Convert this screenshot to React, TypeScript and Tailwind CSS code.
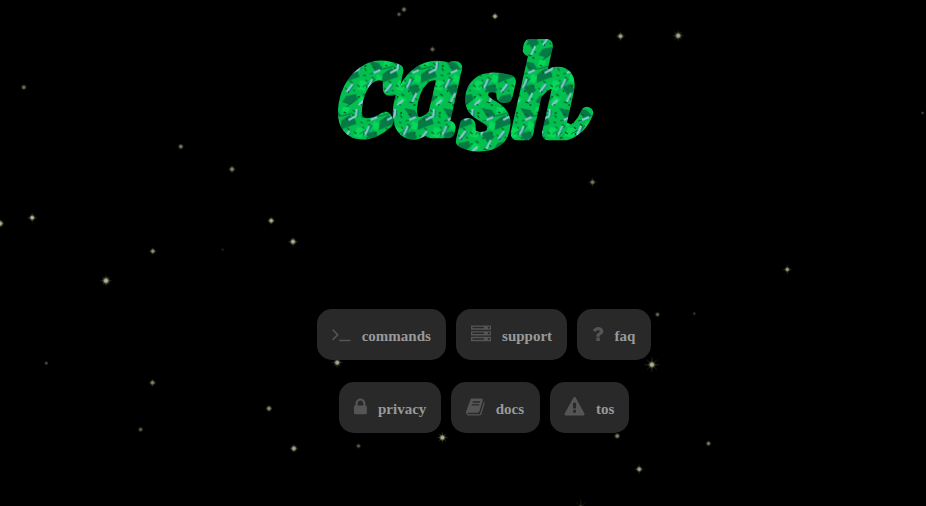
import React from "react";

type Item = { label: string; width: number; path: string; box: string; w: string };

const TERMINAL =
  "M649 983l-466 466q-10 10-23 10t-23-10l-50-50q-10-10-10-23t10-23l393-393-393-393q-10-10-10-23t10-23l50-50q10-10 23-10t23 10l466 466q10 10 10 23t-10 23zm1079 457v64q0 14-9 23t-23 9h-960q-14 0-23-9t-9-23v-64q0-14 9-23t23-9h960q14 0 23 9t9 23z";
const SERVER =
  "M128 1408h1024v-128h-1024v128zM128 896h1024v-128h-1024v128zM1696 1344q0-40-28-68t-68-28-68 28-28 68 28 68 68 28 68-28 28-68zM128 384h1024v-128h-1024v128zM1696 832q0-40-28-68t-68-28-68 28-28 68 28 68 68 28 68-28 28-68zM1696 320q0-40-28-68t-68-28-68 28-28 68 28 68 68 28 68-28 28-68zM1792 1152v384h-1792v-384h1792zM1792 640v384h-1792v-384h1792zM1792 128v384h-1792v-384h1792z";
const QUESTION =
  "M1088 1256v240q0 16-12 28t-28 12h-240q-16 0-28-12t-12-28v-240q0-16 12-28t28-12h240q16 0 28 12t12 28zm316-600q0 54-15.5 101t-35 76.5-55 59.5-57.5 43.5-61 35.5q-41 23-68.5 65t-27.5 67q0 17-12 32.5t-28 15.5h-240q-15 0-25.5-18.5t-10.5-37.5v-45q0-83 65-156.5t143-108.5q59-27 84-56t25-76q0-42-46.5-74t-107.5-32q-65 0-108 29-35 25-107 115-13 16-31 16-12 0-25-8l-164-125q-13-10-15.5-25t5.5-28q160-266 464-266 80 0 161 31t146 83 106 127.5 41 158.5z";
const LOCK =
  "M640 768h512v-192q0-106-75-181t-181-75-181 75-75 181v192zm832 96v576q0 40-28 68t-68 28h-960q-40 0-68-28t-28-68v-576q0-40 28-68t68-28h32v-192q0-184 132-316t316-132 316 132 132 316v192h32q40 0 68 28t28 68z";
const BOOK =
  "M1703 478q40 57 18 129l-275 906q-19 64-76.5 107.5t-122.5 43.5h-923q-77 0-148.5-53.5t-99.5-131.5q-24-67-2-127 0-4 3-27t4-37q1-8-3-21.5t-3-19.5q2-11 8-21t16.5-23.5 16.5-23.5q23-38 45-91.5t30-91.5q3-10 .5-30t-.5-28q3-11 17-28t17-23q21-36 42-92t25-90q1-9-2.5-32t.5-28q4-13 22-30.5t22-22.5q19-26 42.5-84.5t27.5-96.5q1-8-3-25.5t-2-26.5q2-8 9-18t18-23 17-21q8-12 16.5-30.5t15-35 16-36 19.5-32 26.5-23.5 36-11.5 47.5 5.5l-1 3q38-9 51-9h761q74 0 114 56t18 130l-274 906q-36 119-71.5 153.5t-128.5 34.5h-869q-27 0-38 15-11 16-1 43 24 70 144 70h923q29 0 56-15.5t35-41.5l300-987q7-22 5-57 38 15 59 43zm-1064 2q-4 13 2 22.5t20 9.5h608q13 0 25.5-9.5t16.5-22.5l21-64q4-13-2-22.5t-20-9.5h-608q-13 0-25.5 9.5t-16.5 22.5zm-83 256q-4 13 2 22.5t20 9.5h608q13 0 25.5-9.5t16.5-22.5l21-64q4-13-2-22.5t-20-9.5h-608q-13 0-25.5 9.5t-16.5 22.5z";
const WARNING =
  "M1024 1375v-190q0-14-9.5-23.5t-22.5-9.5h-192q-13 0-22.5 9.5t-9.5 23.5v190q0 14 9.5 23.5t22.5 9.5h192q13 0 22.5-9.5t9.5-23.5zm-2-374l18-459q0-12-10-19-13-11-24-11h-220q-11 0-24 11-10 7-10 21l17 457q0 10 10 16.5t24 6.5h185q14 0 23.5-6.5t10.5-16.5zm-14-934l768 1408q35 63-2 126-17 29-46.5 46t-63.5 17h-1536q-34 0-63.5-17t-46.5-46q-37-63-2-126l768-1408q17-31 47-49t65-18 65 18 47 49z";

const rows: Item[][] = [
  [
    { label: "commands", width: 129, path: TERMINAL, box: "64 0 1664 1792", w: "w-[18.6px]" },
    { label: "support", width: 111, path: SERVER, box: "0 0 1792 1792", w: "w-5" },
    { label: "faq", width: 74, path: QUESTION, box: "384 0 1024 1792", w: "w-[11.4px]" },
  ],
  [
    { label: "privacy", width: 102, path: LOCK, box: "320 0 1152 1792", w: "w-[12.9px]" },
    { label: "docs", width: 89, path: BOOK, box: "64 0 1664 1792", w: "w-[18.6px]" },
    { label: "tos", width: 79, path: WARNING, box: "40 0 1792 1792", w: "w-5" },
  ],
];

// x, y, core radius, brightness, ray length
const stars: number[][] = [
  [404, 9.5, 2.1, 0.6, 3], [399, 14.3, 1.9, 0.45, 0], [495, 16.3, 2.2, 0.95, 4], [432.5, 49.3, 2, 0.55, 4],
  [620.5, 36.2, 2.4, 0.9, 5], [678.2, 35.7, 2.6, 0.95, 6], [23.8, 87.3, 2.1, 0.6, 2], [180.8, 146.6, 2.1, 0.65, 3],
  [232, 169.2, 2.3, 0.7, 4], [592.5, 182.2, 2.2, 0.65, 5], [32.2, 217.7, 2.3, 1, 5], [0.2, 223.5, 2.6, 0.95, 4],
  [271.2, 220.7, 2.3, 0.95, 4], [293, 241.7, 2.5, 0.95, 5], [152.8, 251.2, 2.1, 0.8, 4], [222.7, 249.7, 1.4, 0.15, 0],
  [106, 280.7, 2.8, 1, 6], [787.3, 269.5, 2.1, 0.85, 5], [922.6, 113, 1.3, 0.35, 0], [657.5, 314.5, 1.9, 0.55, 3],
  [694.3, 313.6, 1.4, 0.28, 2], [651.9, 364.7, 2.7, 1, 8], [337.2, 362.6, 2.5, 0.95, 6], [46.3, 363.2, 1.6, 0.4, 2],
  [152.5, 382.7, 2.2, 0.7, 4], [269, 408.5, 2.3, 0.75, 3], [140.6, 429.5, 2, 0.5, 2], [293.9, 448.5, 2.5, 0.9, 4],
  [358.5, 446, 1.8, 0.5, 3], [442.4, 437.6, 2.5, 1, 6], [617.2, 436, 2.2, 0.7, 3], [708.5, 443.5, 2, 0.65, 3],
  [639.2, 469.2, 2.3, 0.9, 5], [580.8, 507, 1.6, 0.7, 8],
];

function Starfield() {
  return (
    <svg className="absolute inset-0 h-[506px] w-[926px]" viewBox="0 0 926 506" aria-hidden="true">
      <defs>
        <radialGradient id="glow">
          <stop offset="0" stopColor="#f6f6de" />
          <stop offset="0.36" stopColor="#c2c2a2" stopOpacity="0.85" />
          <stop offset="0.66" stopColor="#6c6c50" stopOpacity="0.4" />
          <stop offset="1" stopColor="#333322" stopOpacity="0" />
        </radialGradient>
      </defs>
      {stars.map(([x, y, r, o, ray], i) => (
        <g key={i} opacity={o}>
          <circle cx={x} cy={y} r={r * 1.65} fill="url(#glow)" />
          <ellipse cx={x} cy={y} rx={ray} ry={0.7} fill="#8a8a6a" opacity={0.26} />
          <ellipse cx={x} cy={y} rx={0.7} ry={ray} fill="#8a8a6a" opacity={0.26} />
          {ray > 5 && (
            <path
              d={`M${x - ray * 0.65} ${y - ray * 0.65}L${x + ray * 0.65} ${y + ray * 0.65}M${x + ray * 0.65} ${y - ray * 0.65}L${x - ray * 0.65} ${y + ray * 0.65}`}
              stroke="#8a8a6a"
              strokeWidth={0.7}
              opacity={0.3}
            />
          )}
        </g>
      ))}
    </svg>
  );
}

function Logo() {
  return (
    <svg className="ml-[329px] h-[130px] w-[274px] overflow-visible" viewBox="329 30 274 130">
      <defs>
        <pattern id="bills" x="340" y="60" width="42" height="47" patternUnits="userSpaceOnUse">
          <rect width="42" height="47" fill="#02c04f" />
          <path d="M0 14L9 8L15 12L17 17L10 19L0 23ZM26 1L37 3L42 9L34 12ZM28 27L37 24L42 30L35 36ZM4 36L14 34L17 39L9 45L0 42Z" fill="#047a45" />
          <path d="M18 20l9 2-4 9-8-2zM1 0l8 1-3 6-6-1zM36 14l6 3-2 6-6-2zM20 36l7 3-4 6-6-3z" fill="#08d85a" />
          <path d="M2 5l3 1M12 3l3 2M21 15l3 1M24 20l2 2M15 25l3 2M30 17l3 2M2 28l3 2M11 30l2 1M22 34l3 2M31 42l4 1M19 44l3 1M37 38l2 2M7 21l3 2M31 7l3 1M22 8l2 3M5 11l2 2" stroke="#035527" strokeWidth="1.1" />
          <path d="M12 8h1.5M22 6h1.5M5 32h1.5M29 31h1.5M17 37h1.5M38 26h1.5M25 27h1.5M36 45h1.5" stroke="#062812" strokeWidth="1.5" />
          <path d="M0 9l12-3M21 27l14-8M5 47l9-7M28 14l8-2" stroke="#03683a" strokeWidth="1" />
          <path d="M16 2V9M16 9L8 13M31 19L27 28M10 24L4 32M24 40L18 45M38 33L34 42M39 10L32 13" stroke="#8cc6dc" strokeWidth="2.1" />
          <path d="M18 3v7M33 20l-4 9M12 25l-6 8" stroke="#27618b" strokeWidth="0.8" />
        </pattern>
      </defs>
      <text
        className="font-['Liberation_Serif',serif] italic"
        transform="translate(36 0) scale(0.92 1) skewX(-4)"
        fill="url(#bills)"
        stroke="url(#bills)"
        strokeWidth="14.5"
        strokeLinejoin="round"
        fontSize="134"
      >
        <tspan x="339" y="131.5">c</tspan>
        <tspan x="399" y="131.5">a</tspan>
        <tspan x="472" y="143">s</tspan>
        <tspan x="528" y="133.5" fontSize="125">h</tspan>
      </text>
      <path d="M566 134C576 131 583 123 587 113" fill="none" stroke="url(#bills)" strokeWidth="12.5" strokeLinecap="round" />
    </svg>
  );
}

export default function App() {
  return (
    <main className="relative h-[506px] w-[926px] overflow-hidden bg-black font-['Liberation_Serif',serif]">
      <Starfield />
      <div className="relative pt-[30px]">
        <Logo />
        <nav className="mt-[149px] flex flex-col items-center gap-[22px] pl-[42px]">
          {rows.map((row, r) => (
            <div key={r} className="flex gap-2.5">
              {row.map((item) => (
                <a
                  key={item.label}
                  className="flex h-[51px] items-center rounded-[15px] bg-[#292929] pl-[15px] text-[15px] font-bold text-[#999]"
                  style={{ width: item.width }}
                >
                  <svg className={`mb-0.5 h-5 shrink-0 fill-[#555] ${item.w}`} viewBox={item.box} overflow="visible">
                    <path d={item.path} fillRule={item.label === "support" ? "evenodd" : "nonzero"} />
                  </svg>
                  <span className="ml-[11.1px] mt-[3px]">{item.label}</span>
                </a>
              ))}
            </div>
          ))}
        </nav>
      </div>
    </main>
  );
}
